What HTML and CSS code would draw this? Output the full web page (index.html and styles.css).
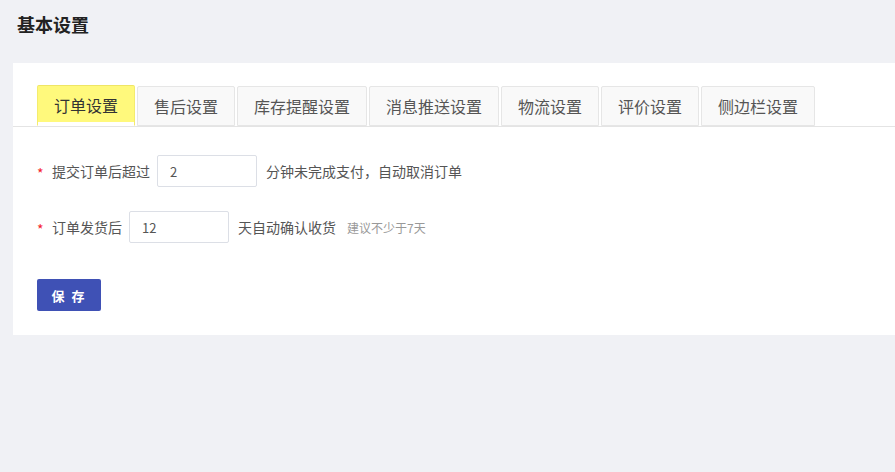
FILE: index.html
```html
<!DOCTYPE html>
<html lang="zh">
<head>
<meta charset="utf-8">
<title>基本设置</title>
<link rel="stylesheet" href="styles.css">
</head>
<body>
<div class="page">
  <h1 class="page-title">基本设置</h1>
  <div class="card">
    <div class="tabs">
      <div class="tab active">订单设置</div>
      <div class="tab">售后设置</div>
      <div class="tab">库存提醒设置</div>
      <div class="tab">消息推送设置</div>
      <div class="tab">物流设置</div>
      <div class="tab">评价设置</div>
      <div class="tab">侧边栏设置</div>
    </div>
    <div class="form">
      <div class="row">
        <span class="req">*</span>
        <span class="label">提交订单后超过</span>
        <input class="input" type="text" value="2">
        <span class="suffix">分钟未完成支付，自动取消订单</span>
      </div>
      <div class="row">
        <span class="req">*</span>
        <span class="label">订单发货后</span>
        <input class="input" type="text" value="12">
        <span class="suffix">天自动确认收货</span>
        <span class="hint">建议不少于7天</span>
      </div>
      <button class="btn">保 存</button>
    </div>
  </div>
</div>
</body>
</html>
```
FILE: styles.css
```css
* { box-sizing: border-box; }
html, body {
  margin: 0;
  padding: 0;
  background: #f0f1f5;
  font-family: "Noto Sans CJK SC", "Noto Sans", sans-serif;
  color: #333;
}
.page {
  padding: 10px 0 0 13px;
}
.page-title {
  margin: 0 0 0 4px;
  font-size: 18px;
  font-weight: bold;
  line-height: 28px;
  color: #222;
}
.card {
  margin-top: 25px;
  background: #fff;
  height: 272px;
}
.tabs {
  display: flex;
  gap: 2px;
  padding: 23px 0 0 24px;
  border-bottom: 1px solid #e4e4e4;
  height: 64px;
}
.tab {
  height: 40px;
  margin-bottom: -1px;
  padding: 0 16px;
  border: 1px solid #e6e6e6;
  border-radius: 2px 2px 0 0;
  background: #f9f9f9;
  font-size: 16px;
  line-height: 38px;
  color: #555;
  white-space: nowrap;
}
.tab.active {
  background: #fff97c;
  border-color: #f4ec6e;
  border-top: 1px solid #efe566;
  border-bottom-color: #fff;
  height: 41px;
  margin-top: -1px;
  box-shadow: inset 0 -3px 0 #fff;
  color: #333;
}
.form {
  padding: 28px 0 0 24px;
}
.row {
  display: flex;
  align-items: center;
  height: 32px;
  margin-bottom: 24px;
  font-size: 14px;
  color: #555;
}
.req {
  color: #f5222d;
  width: 15px;
  font-size: 14px;
  padding-top: 3px;
}
.label {
  margin-right: 7px;
}
.input {
  width: 100px;
  height: 32px;
  border: 1px solid #dcdfe6;
  border-radius: 2px;
  padding: 0 12px;
  font-family: inherit;
  font-size: 13px;
  color: #555;
  outline: none;
}
.suffix {
  margin-left: 9px;
}
.hint {
  margin-left: 11px;
  font-size: 12px;
  color: #999;
}
.btn {
  margin-top: 12px;
  width: 64px;
  height: 32px;
  border: none;
  border-radius: 2px;
  background: #3f51b5;
  color: #fff;
  font-family: inherit;
  font-size: 13px;
  font-weight: bold;
  letter-spacing: 2px;
  cursor: pointer;
}
```
